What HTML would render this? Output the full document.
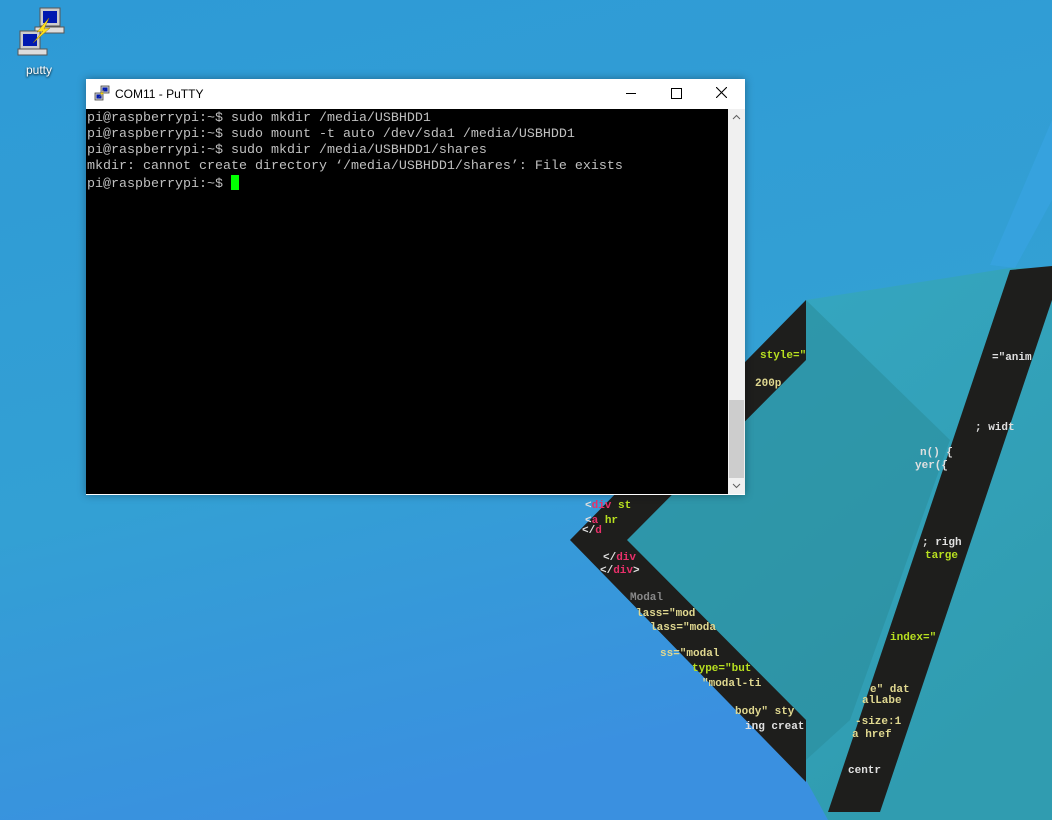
<!DOCTYPE html>
<html><head><style>
body{margin:0;width:1052px;height:820px;overflow:hidden;position:relative;font-family:"Liberation Sans",sans-serif;}
#bg{position:absolute;left:0;top:0}
.icon{position:absolute;left:10px;top:6px;width:58px;text-align:center;color:#fff;font-size:12px;text-shadow:0 1px 2px #000}
.win{position:absolute;left:86px;top:79px;width:659px;height:416px;background:#fff;box-shadow:0 0 8px rgba(0,0,0,.35)}
.title{height:30px;position:relative;font-size:12px;color:#000}
.title span{position:absolute;left:29px;top:8px}
.term{position:absolute;left:0;top:30px;width:642px;height:385px;background:#000;font-family:"Liberation Mono",monospace;font-size:13.33px;line-height:16px;color:#c0c0c0;white-space:pre;padding-top:2px;box-sizing:border-box;padding-left:1px}
.term div{height:16px}
.sb{position:absolute;left:642px;top:30px;width:17px;height:385px;background:#f0f0f0}
.thumb{position:absolute;left:1px;top:291px;width:15px;height:78px;background:#cdcdcd}
.cur{display:inline-block;width:8px;height:15px;background:#00ff00;vertical-align:-3px}
</style></head><body>
<svg id="bg" width="1052" height="820">
<defs>
<linearGradient id="g" x1="0" y1="0" x2="0.3" y2="1">
<stop offset="0" stop-color="#2e9ad6"/><stop offset="0.6" stop-color="#33a0d4"/><stop offset="1" stop-color="#3a90e0"/></linearGradient>
<linearGradient id="t" x1="0" y1="0" x2="0.6" y2="1"><stop offset="0" stop-color="#36a8c4"/><stop offset="1" stop-color="#309cb0"/></linearGradient>
</defs>
<rect width="1052" height="820" fill="url(#g)"/>
<polygon points="1052,120 1052,200 1015,268 990,265" fill="#3aa6e8" opacity=".5"/>
<polygon points="806,300 1010,268 1052,268 1052,820 828,820 806,780 625,540" fill="url(#t)"/>
<polygon points="806,300 950,440 850,720 806,760 625,540" fill="#2b8e9c" opacity=".6"/>
<polygon points="1010,270 1052,266 1052,300 880,812 828,812" fill="#1e1e1c"/>
<polygon points="806,300 806,360 627,540 806,720 806,782 570,540" fill="#1e1e1c"/>
<g font-family="Liberation Mono,monospace" font-size="11" font-weight="bold">
<text x="585" y="508" fill="#e0e0e0">&lt;<tspan fill="#e8306a">div</tspan> <tspan fill="#b8e020">st</tspan></text>
<text x="585" y="523" fill="#e0e0e0">&lt;<tspan fill="#e8306a">a</tspan> <tspan fill="#b8e020">hr</tspan></text>
<text x="582" y="533" fill="#e0e0e0">&lt;/<tspan fill="#e8306a">d</tspan></text>
<text x="603" y="560" fill="#e0e0e0">&lt;/<tspan fill="#e8306a">div</tspan></text>
<text x="600" y="573" fill="#e0e0e0">&lt;/<tspan fill="#e8306a">div</tspan>&gt;</text>
<text x="760" y="358" fill="#b8e020">style="</text>
<text x="755" y="386" fill="#e0d890">200p</text>
<text x="992" y="360" fill="#e0e0e0">="anim</text>
<text x="975" y="430" fill="#e0e0e0">; widt</text>
<text x="920" y="455" fill="#e0e0e0">n() {</text>
<text x="915" y="468" fill="#e0e0e0">yer({</text>
<text x="922" y="545" fill="#e0e0e0">; righ</text>
<text x="925" y="558" fill="#b8e020">targe</text>
<text x="890" y="640" fill="#b8e020">index="</text>
<text x="870" y="692" fill="#e0d890">e" dat</text>
<text x="862" y="703" fill="#e0d890">alLabe</text>
<text x="855" y="724" fill="#e0d890">-size:1</text>
<text x="852" y="737" fill="#e0d890">a href</text>
<text x="848" y="773" fill="#e0e0e0">centr</text>
<text x="630" y="600" fill="#888">Modal</text>
<text x="636" y="616" fill="#e0d890">lass="mod</text>
<text x="650" y="630" fill="#e0d890">lass="moda</text>
<text x="660" y="656" fill="#e0d890">ss="modal</text>
<text x="692" y="671" fill="#b8e020">type="but</text>
<text x="702" y="686" fill="#e0d890">"modal-ti</text>
<text x="735" y="714" fill="#e0d890">body" sty</text>
<text x="745" y="729" fill="#e0e0e0">ing creat</text>
</g>
</svg>
<div class="icon">
<svg width="52" height="50" viewBox="0 0 52 50">
<rect x="27" y="2" width="20" height="18" fill="#ccc" stroke="#555"/><rect x="30" y="5" width="14" height="12" fill="#0018b0"/>
<rect x="22" y="21" width="29" height="6" fill="#ddd" stroke="#555"/>
<rect x="7" y="25" width="20" height="18" fill="#ccc" stroke="#555"/><rect x="10" y="28" width="14" height="12" fill="#0018b0"/>
<rect x="5" y="43" width="29" height="6" fill="#ddd" stroke="#555"/>
<polygon points="36,12 24,26 30,25 20,37 37,22 31,23" fill="#ffe020" stroke="#a08000" stroke-width=".5"/>
</svg><div style="margin-top:4px">putty</div></div>
<div class="win">
<div class="title">
<svg style="position:absolute;left:8px;top:6px" width="16" height="17" viewBox="0 0 16 17"><rect x="7" y="1" width="8" height="7" fill="#ccc" stroke="#444" stroke-width=".8"/><rect x="1" y="8" width="8" height="7" fill="#ccc" stroke="#444" stroke-width=".8"/><rect x="2.5" y="9.5" width="5" height="4" fill="#0018b0"/><rect x="8.5" y="2.5" width="5" height="4" fill="#0018b0"/><polygon points="11,4 6,9 8,9 4,13 10,8 8,8" fill="#f0d000"/></svg>
<span>COM11 - PuTTY</span>
<div style="position:absolute;left:540px;top:14px;width:10px;height:1px;background:#000"></div>
<div style="position:absolute;left:585px;top:9px;width:9px;height:9px;border:1px solid #000"></div>
<svg style="position:absolute;left:630px;top:8px" width="11" height="11"><path d="M0 0L11 11M11 0L0 11" stroke="#000" stroke-width="1.1"/></svg>
</div>
<div class="term"><div>pi@raspberrypi:~$ sudo mkdir /media/USBHDD1</div><div>pi@raspberrypi:~$ sudo mount -t auto /dev/sda1 /media/USBHDD1</div><div>pi@raspberrypi:~$ sudo mkdir /media/USBHDD1/shares</div><div>mkdir: cannot create directory ‘/media/USBHDD1/shares’: File exists</div><div>pi@raspberrypi:~$ <span class="cur"></span></div></div>
<div class="sb"><svg style="position:absolute;left:4px;top:5px" width="9" height="6"><path d="M1 5L4.5 1.5L8 5" stroke="#606060" fill="none"/></svg><div class="thumb"></div><svg style="position:absolute;left:4px;top:374px" width="9" height="6"><path d="M1 1L4.5 4.5L8 1" stroke="#606060" fill="none"/></svg></div>
</div>
</body></html>
